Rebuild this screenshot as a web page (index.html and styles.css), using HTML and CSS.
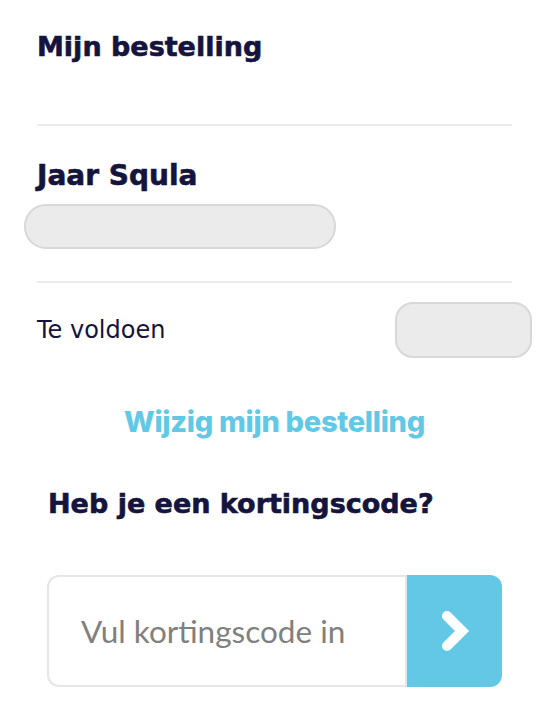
FILE: index.html
```html
<!DOCTYPE html>
<html lang="nl">
<head>
    <meta charset="UTF-8">
    <meta name="viewport" content="width=device-width, initial-scale=1.0">
    <title>Mijn bestelling</title>
    <link rel="stylesheet" href="styles.css">
</head>
<body>
    <div class="order">
        <h2 class="order-title">Mijn bestelling</h2>
        <hr class="divider">

        <h3 class="product-title">Jaar Squla</h3>
        <div class="skeleton skeleton-wide"></div>
        <hr class="divider">

        <div class="total-row">
            <span class="total-label">Te voldoen</span>
            <div class="skeleton skeleton-price"></div>
        </div>

        <a class="change-link" href="#">Wijzig mijn bestelling</a>

        <h3 class="coupon-title">Heb je een kortingscode?</h3>
        <form class="coupon" onsubmit="return false">
            <input type="text" class="coupon-input" placeholder="Vul kortingscode in">
            <button type="submit" class="coupon-btn" aria-label="Toepassen">
                <svg width="30" height="40" viewBox="0 0 30 40">
                    <path d="M7 5 L22 20 L7 35" fill="none" stroke="#fff" stroke-width="10" stroke-linecap="round" stroke-linejoin="miter"/>
                </svg>
            </button>
        </form>
    </div>
</body>
</html>
```

FILE: styles.css
```css
body {
    margin: 0;
    background: #fff;
    font-family: "DejaVu Sans", "Noto Sans", sans-serif;
    color: #14143d;
}
.order {
    padding: 30px 34px 0 37px;
}
.order-title,
.product-title,
.coupon-title {
    font-weight: 700;
    -webkit-text-stroke: 0.6px currentColor;
}
.order-title {
    margin: 0;
    font-size: 27px;
    line-height: 34px;
}
.divider {
    margin: 60px 0 0;
    border: none;
    border-top: 2px solid #ececec;
}
.product-title {
    margin: 34px 0 0;
    font-size: 28px;
    line-height: 32px;
}
.skeleton {
    background: #ebebeb;
    border: 2px solid #d8d8d8;
    box-sizing: border-box;
}
.skeleton-wide {
    margin: 12px 0 0 -13px;
    width: 312px;
    height: 45px;
    border-radius: 22px;
}
.order .skeleton-wide + .divider {
    margin-top: 32px;
}
.total-row {
    display: flex;
    align-items: center;
    justify-content: space-between;
    margin: 19px -20px 0 0;
}
.total-label {
    font-size: 24px;
    font-weight: 400;
}
.skeleton-price {
    width: 137px;
    height: 56px;
    border-radius: 18px;
}
.change-link {
    display: block;
    margin: 47px 0 0;
    text-align: center;
    font-family: Inter, "DejaVu Sans", sans-serif;
    font-size: 29px;
    line-height: 34px;
    font-weight: 800;
    letter-spacing: -0.3px;
    color: #61c9e6;
    text-decoration: none;
}
.coupon-title {
    margin: 49px 0 0 11px;
    font-size: 27px;
    line-height: 32px;
}
.coupon {
    display: flex;
    margin: 55px 10px 0 10px;
    height: 112px;
}
.coupon-input {
    flex: 1;
    min-width: 0;
    padding: 0 0 0 32px;
    border: 2px solid #e6e6e6;
    border-right: none;
    border-radius: 12px 0 0 12px;
    font-family: Lato, sans-serif;
    font-size: 31.5px;
    color: #333;
    outline: none;
}
.coupon-input::placeholder {
    color: #808080;
}
.coupon-btn {
    width: 97px;
    border: none;
    border-left: 2px solid #e6e6e6;
    border-radius: 0 12px 12px 0;
    background: #62c8e5;
    display: flex;
    align-items: center;
    justify-content: center;
    cursor: pointer;
    padding: 0;
}
```
